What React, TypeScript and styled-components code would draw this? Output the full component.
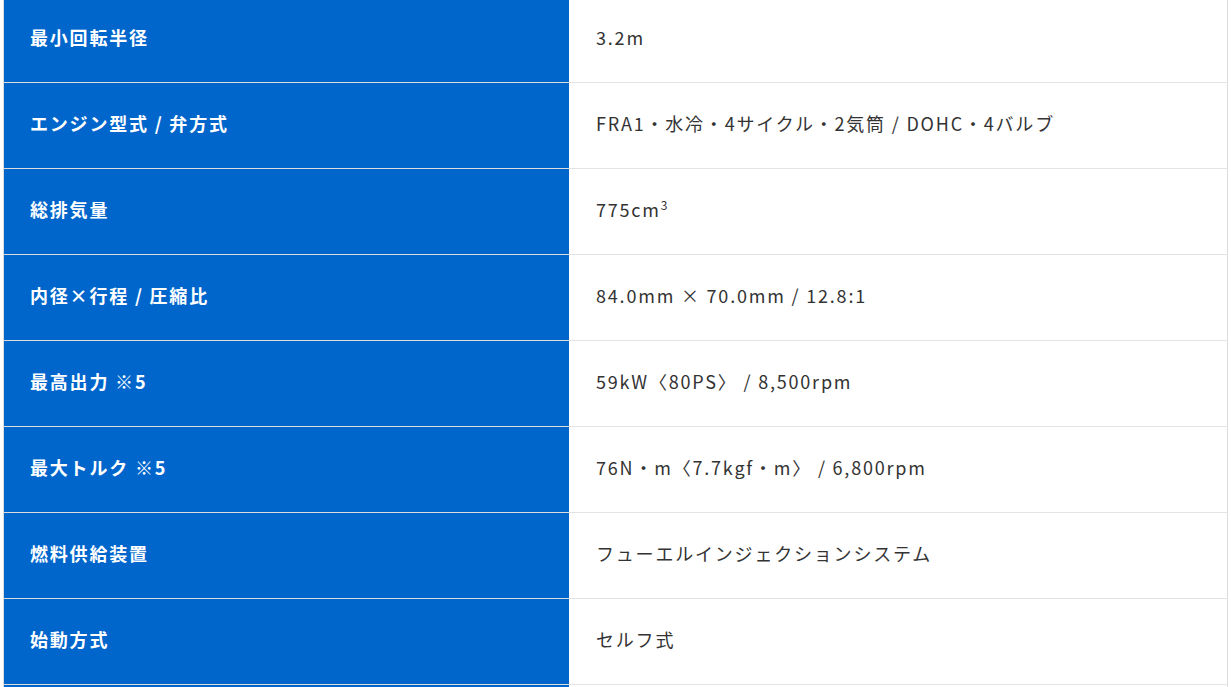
import React from 'react';
import styled, { createGlobalStyle } from 'styled-components';

const GlobalStyle = createGlobalStyle`
  html, body {
    margin: 0;
    padding: 0;
    background: #fff;
    overflow: hidden;
  }
  body {
    font-family: Meiryo, "Noto Sans CJK JP", "Noto Sans", sans-serif;
  }
`;

const Wrapper = styled.div`
  margin: -4px 3px 0;
`;

const SpecTable = styled.table`
  width: 100%;
  border-collapse: collapse;
  border: 1px solid #dcdcdc;
  table-layout: fixed;
`;

const Label = styled.th`
  width: 566px;
  height: 86px;
  box-sizing: border-box;
  padding: 0 26px 6px;
  background: #0066cc;
  color: #fff;
  font-size: 18px;
  font-weight: 700;
  letter-spacing: 0.1em;
  text-align: left;
  vertical-align: middle;
  border-bottom: 1px solid #dcdcdc;
  border-right: 1px solid #fff;
`;

const Value = styled.td`
  height: 86px;
  box-sizing: border-box;
  padding: 0 26px 6px;
  color: #333;
  font-size: 18px;
  letter-spacing: 0.1em;
  vertical-align: middle;
  border-bottom: 1px solid #e3e3e3;
`;

const Sup = styled.sup`
  font-size: 12px;
  vertical-align: 7px;
  line-height: 0;
`;

type Spec = {
  label: string;
  value: React.ReactNode;
};

const specs: Spec[] = [
  { label: '最小回転半径', value: '3.2m' },
  { label: 'エンジン型式 / 弁方式', value: 'FRA1・水冷・4サイクル・2気筒 / DOHC・4バルブ' },
  {
    label: '総排気量',
    value: (
      <>
        775cm<Sup>3</Sup>
      </>
    ),
  },
  { label: '内径×行程 / 圧縮比', value: '84.0mm × 70.0mm / 12.8:1' },
  { label: '最高出力 ※5', value: '59kW〈80PS〉 / 8,500rpm' },
  { label: '最大トルク ※5', value: '76N・m〈7.7kgf・m〉 / 6,800rpm' },
  { label: '燃料供給装置', value: 'フューエルインジェクションシステム' },
  { label: '始動方式', value: 'セルフ式' },
  // next row only peeks in at the bottom edge
  { label: '', value: '' },
];

const App: React.FC = () => (
  <Wrapper>
    <GlobalStyle />
    <SpecTable>
      <tbody>
        {specs.map((spec, i) => (
          <tr key={i}>
            <Label scope="row">{spec.label}</Label>
            <Value>{spec.value}</Value>
          </tr>
        ))}
      </tbody>
    </SpecTable>
  </Wrapper>
);

export default App;
